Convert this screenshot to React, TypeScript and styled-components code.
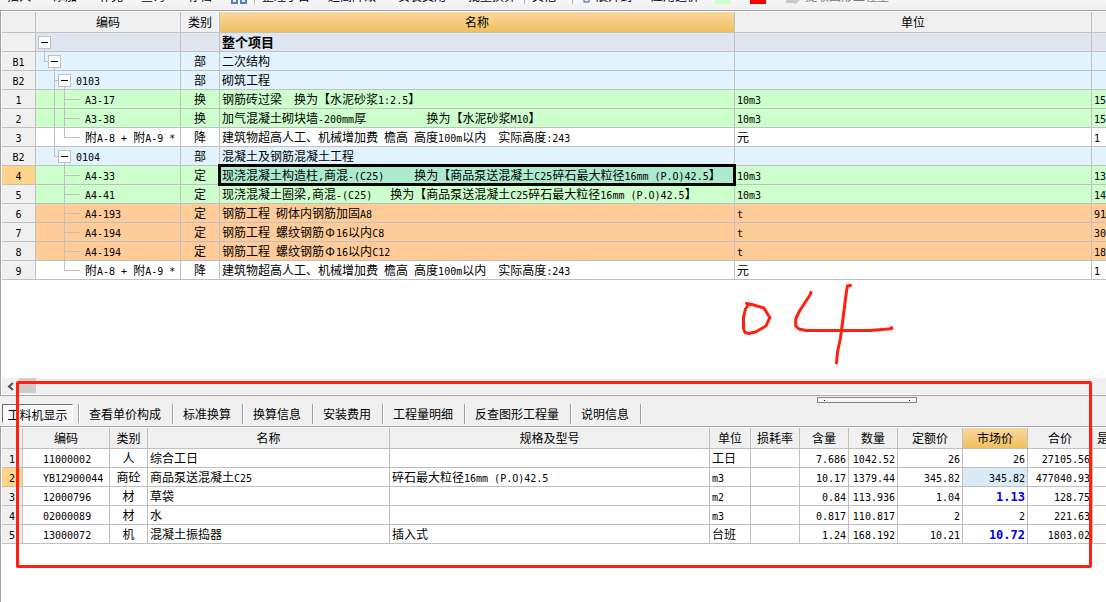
import React from 'react';
import styled, { createGlobalStyle, css } from 'styled-components';

const GlobalStyle = createGlobalStyle`
  * { box-sizing: border-box; }
  body {
    margin: 0;
    background: #fff;
    color: #000;
    font: 12px/18px "Noto Sans CJK SC", sans-serif;
  }
  button {
    margin: 0;
    padding: 0;
    border: 0;
    background: none;
    color: inherit;
    font: inherit;
    white-space: nowrap;
  }
`;

const line = '#c0c0c0';
const frame = '#a5a5a9';
const face = '#f0f0f0';
const amber = 'linear-gradient(#f9d8a0, #f0bf5f)';

const Page = styled.div`
  position: relative;
  display: flex;
  flex-direction: column;
  min-height: 100vh;
  overflow: hidden;
`;

/* ---------- mixed-width text ---------- */

const Half = styled.span<{ $big?: boolean }>`
  font-family: "DejaVu Sans Mono", monospace;
  font-size: ${(p) => (p.$big ? 12 : 10)}px;
  line-height: 0;
  white-space: pre;
`;

const Wide = styled.span`
  display: inline-block;
  width: 12px;
  line-height: 12px;
  text-align: center;
`;

function Txt({ children, big }: { children: string; big?: boolean }) {
  return (
    <>
      {children.split(/([\x20-\x7e]+|Φ)/).map((s, i) => {
        if (!s) return null;
        if (s === 'Φ') return <Wide key={i}>Φ</Wide>;
        return i % 2 ? <Half key={i} $big={big}>{s}</Half> : s;
      })}
    </>
  );
}

/* ---------- toolbar ---------- */

const Toolbar = styled.div`
  display: flex;
  align-items: flex-end;
  height: 10px;
  padding: 0 0 6px 7px;
  overflow: hidden;
  background: linear-gradient(#f7f7f7, #efefef);
`;

const ToolButton = styled.button<{ $w: number; $muted?: boolean }>`
  flex: none;
  display: flex;
  align-items: flex-end;
  width: ${(p) => p.$w}px;
  height: 16px;
  line-height: 16px;
  gap: 4px;
  color: ${(p) => (p.$muted ? '#777' : '#000')};
`;

const ToolSep = styled.span`
  flex: none;
  width: 1px;
  height: 20px;
  margin: 0 7px 0 0;
  background: #b4b4b4;
`;

const Swatch = styled.button<{ $c: string }>`
  flex: none;
  width: 16px;
  height: 16px;
  margin-right: 19px;
  && { background: ${(p) => p.$c}; }
`;

const BookIcon = () => (
  <svg width="16" height="16" viewBox="0 0 16 16" aria-hidden="true">
    <rect x="1" y="9" width="5" height="6" fill="#dfe9f7" stroke="#5f7fae" strokeWidth="2" />
    <rect x="10" y="9" width="5" height="6" fill="#dfe9f7" stroke="#5f7fae" strokeWidth="2" />
  </svg>
);

const PageIcon = () => (
  <svg width="7" height="16" viewBox="0 0 7 16" aria-hidden="true">
    <rect x="1" y="3" width="5" height="12" fill="#dfe9f7" stroke="#3f5f8f" />
    <path d="M3 12h2" stroke="#3f5f8f" />
  </svg>
);

const ArrowIcon = () => (
  <svg width="16" height="16" viewBox="0 0 16 16" aria-hidden="true">
    <path d="M1 10h7V6l7 6-4 4-3-1H1z" fill="#c9c9c9" />
  </svg>
);

/* ---------- grids ---------- */

const Pane = styled.section<{ $grow?: boolean }>`
  border-top: 1px solid ${frame};
  border-left: 1px solid ${frame};
  padding: 1px 0 0 1px;
  ${(p) => p.$grow && 'flex: 1;'}
`;

const Grid = styled.table`
  width: 100%;
  table-layout: fixed;
  border-collapse: separate;
  border-spacing: 0;
`;

const Th = styled.th<{ $hot?: boolean; $clip?: boolean }>`
  height: 21px;
  padding: 0 ${(p) => (p.$clip ? 4 : 0)}px;
  border: solid ${line};
  border-width: 0 1px 1px 0;
  background: ${(p) => (p.$hot ? amber : face)};
  font-weight: 400;
  text-align: ${(p) => (p.$clip ? 'left' : 'center')};
  white-space: nowrap;
  overflow: ${(p) => (p.$clip ? 'hidden' : 'visible')};
  ${(p) => p.$clip && 'border-right: 0;'}
`;

const Td = styled.td<{ $align?: string; $indent?: number; $bg?: string; $current?: boolean }>`
  position: relative;
  height: 19px;
  padding: 0 2px 0 ${(p) => p.$indent ?? 2}px;
  border: solid ${line};
  border-width: 0 1px 1px 0;
  text-align: ${(p) => p.$align ?? 'left'};
  white-space: pre;
  ${(p) => p.$bg && `background: ${p.$bg};`}
  &:last-child { border-right: 0; }
  ${(p) =>
    p.$current &&
    css`
      &::after {
        content: '';
        position: absolute;
        inset: -2px;
        z-index: 1;
        border: 3px solid #000;
      }
    `}
`;

const Tr = styled.tr<{ $bg?: string }>`
  background: ${(p) => p.$bg ?? '#fff'};
`;

const Strong = styled.b`
  font-size: 13px;
`;

const Price = styled.b`
  color: #0000f0;
`;

/* ---------- tree ---------- */

const Tree = styled.div`
  display: flex;
  height: 18px;
`;

type Link = ' ' | '|' | '+' | 'L';

const Guide = styled.span<{ $k: Link }>`
  position: relative;
  flex: none;
  width: 10px;
  &::before {
    content: '';
    position: absolute;
    left: 6px;
    top: 0;
    width: 1px;
    height: ${(p) => (p.$k === ' ' ? 0 : p.$k === 'L' ? 9 : 19)}px;
    background: ${line};
  }
  &::after {
    content: '';
    position: absolute;
    left: 6px;
    top: 9px;
    width: ${(p) => (p.$k === '+' || p.$k === 'L' ? 4 : 0)}px;
    height: 1px;
    background: ${line};
  }
`;

const Stub = styled.span`
  flex: none;
  width: 12px;
  height: 1px;
  margin: 9px 5px 0 0;
  background: ${line};
`;

const Toggle = styled.button`
  position: relative;
  flex: none;
  width: 13px;
  height: 13px;
  margin: 3px 5px 0 0;
  && {
    border: 1px solid ${line};
    background: #fff;
  }
  &::before {
    content: '';
    position: absolute;
    left: 2px;
    top: 5px;
    width: 7px;
    height: 1px;
    background: #000;
  }
  &::after {
    content: '';
    position: absolute;
    left: 5px;
    top: 12px;
    width: 1px;
    height: 3px;
    background: ${line};
  }
`;

interface Item {
  no: string;
  links: Link[];
  group?: boolean;
  code?: string;
  kind: string;
  name: string;
  unit?: string;
  qty?: string;
  bg?: string;
  selected?: boolean;
}

const blue = '#e1f3ff';
const green = '#ccffcc';
const orange = '#ffcc99';
const extra = '建筑物超高人工、机械增加费 檐高 高度100m以内  实际高度:243';
const mix = '换为【商品泵送混凝土C25碎石最大粒径16mm (P.O)42.5】';

const items: Item[] = [
  { no: '', links: [], group: true, kind: '', name: '整个项目', bg: '#dfe6f0' },
  { no: 'B1', links: ['L'], group: true, kind: '部', name: '二次结构', bg: blue },
  { no: 'B2', links: [' ', '+'], group: true, code: '0103', kind: '部', name: '砌筑工程', bg: blue },
  { no: '1', links: [' ', '|', '+'], code: 'A3-17', kind: '换', name: '钢筋砖过梁  换为【水泥砂浆1:2.5】', unit: '10m3', qty: '15', bg: green },
  { no: '2', links: [' ', '|', '+'], code: 'A3-38', kind: '换', name: '加气混凝土砌块墙-200mm厚          换为【水泥砂浆M10】', unit: '10m3', qty: '15', bg: green },
  { no: '3', links: [' ', '|', 'L'], code: '附A-8 + 附A-9 *', kind: '降', name: extra, unit: '元', qty: '1' },
  { no: 'B2', links: [' ', 'L'], group: true, code: '0104', kind: '部', name: '混凝土及钢筋混凝土工程', bg: blue },
  { no: '4', links: [' ', ' ', '+'], code: 'A4-33', kind: '定', name: `现浇混凝土构造柱,商混-(C25)     ${mix}`, unit: '10m3', qty: '13', bg: green, selected: true },
  { no: '5', links: [' ', ' ', '+'], code: 'A4-41', kind: '定', name: `现浇混凝土圈梁,商混-(C25)   ${mix}`, unit: '10m3', qty: '14', bg: green },
  { no: '6', links: [' ', ' ', '+'], code: 'A4-193', kind: '定', name: '钢筋工程 砌体内钢筋加固A8', unit: 't', qty: '91', bg: orange },
  { no: '7', links: [' ', ' ', '+'], code: 'A4-194', kind: '定', name: '钢筋工程 螺纹钢筋Φ16以内C8', unit: 't', qty: '30', bg: orange },
  { no: '8', links: [' ', ' ', '+'], code: 'A4-194', kind: '定', name: '钢筋工程 螺纹钢筋Φ16以内C12', unit: 't', qty: '18', bg: orange },
  { no: '9', links: [' ', ' ', 'L'], code: '附A-8 + 附A-9 *', kind: '降', name: extra, unit: '元', qty: '1' },
];

const resources = [
  ['1', '11000002', '人', '综合工日', '', '工日', '', '7.686', '1042.52', '26', '26', '27105.56'],
  ['2', 'YB12900044', '商砼', '商品泵送混凝土C25', '碎石最大粒径16mm (P.O)42.5', 'm3', '', '10.17', '1379.44', '345.82', '345.82', '477040.93'],
  ['3', '12000796', '材', '草袋', '', 'm2', '', '0.84', '113.936', '1.04', '1.13', '128.75'],
  ['4', '02000089', '材', '水', '', 'm3', '', '0.817', '110.817', '2', '2', '221.63'],
  ['5', '13000072', '机', '混凝土振捣器', '插入式', '台班', '', '1.24', '168.192', '10.21', '10.72', '1803.02'],
];

const resourceHeads = ['', '编码', '类别', '名称', '规格及型号', '单位', '损耗率', '含量', '数量', '定额价', '市场价', '合价', '是'];

const Cols = ({ widths }: { widths: number[] }) => (
  <colgroup>
    {widths.map((w, i) => (
      <col key={i} width={w} />
    ))}
    <col />
  </colgroup>
);

/* ---------- scroll bar, splitter, tabs ---------- */

const Blank = styled.div`
  height: 98px;
`;

const ScrollBar = styled.div`
  display: flex;
  height: 17px;
  background: ${face};
  border-bottom: 1px solid #fff;
`;

const ScrollArrow = styled.button`
  display: flex;
  align-items: center;
  justify-content: center;
  width: 17px;
`;

const Thumb = styled.div`
  width: 17px;
  height: 15px;
  background: #cdcdcd;
`;

const TabPanel = styled.div`
  border-top: 1px solid ${frame};
  background: ${face};
`;

const Splitter = styled.div`
  display: flex;
  justify-content: flex-end;
  height: 8px;
  padding: 1px 189px 0 0;
`;

const Grip = styled.div`
  display: flex;
  justify-content: space-between;
  width: 100px;
  height: 6px;
  padding: 2px 6px 0;
  border: 1px solid #868686;
  background: #f4f4f4;
  &::before,
  &::after {
    content: '';
    width: 1px;
    height: 1px;
    background: #000080;
  }
`;

const Tabs = styled.div`
  display: flex;
  height: 22px;
  padding: 0 0 2px 2px;
`;

const Tab = styled.button<{ $active?: boolean }>`
  && {
    padding: 0 11px 0 10px;
    border-right: 1px solid #a0a0a0;
    box-shadow: 1px 0 #fff;
  }
  ${(p) =>
    p.$active &&
    css`
      && {
        width: 71px;
        height: 19px;
        margin-right: 6px;
        padding: 1px 0 0;
        border: 1px solid;
        border-color: #6e6e6e #fff #fff #6e6e6e;
        box-shadow: 5px 0 ${face}, 6px 0 #a0a0a0, 7px 0 #fff;
        background: repeating-conic-gradient(#fff 0 25%, ${face} 0 50%) 0 0 / 2px 2px;
      }
    `}
`;

/* ---------- red markup ---------- */

const Frame = styled.div`
  position: absolute;
  z-index: 2;
  left: 16px;
  right: 14px;
  top: 381px;
  height: 187px;
  border: 3px solid #ff2012;
  border-radius: 2px;
  pointer-events: none;
`;

const Ink = styled.svg`
  position: absolute;
  z-index: 2;
  left: 740px;
  top: 282px;
  pointer-events: none;
`;

export default function App() {
  return (
    <Page>
      <GlobalStyle />
      <Toolbar>
        <ToolButton $w={46}>插入</ToolButton>
        <ToolButton $w={46}>添加</ToolButton>
        <ToolButton $w={42}>补充</ToolButton>
        <ToolButton $w={47}>查询</ToolButton>
        <ToolButton $w={43}>存档</ToolButton>
        <ToolButton $w={23} aria-label="查找"><BookIcon /></ToolButton>
        <ToolSep />
        <ToolButton $w={66}>整理子目</ToolButton>
        <ToolButton $w={70}>超高降效</ToolButton>
        <ToolButton $w={70}>安装费用</ToolButton>
        <ToolButton $w={56}>批量换算</ToolButton>
        <ToolSep />
        <ToolButton $w={40}>其他</ToolButton>
        <ToolSep />
        <ToolButton $w={71}>
          <Wide><PageIcon /></Wide>展开到
        </ToolButton>
        <ToolButton $w={64}>应用造价</ToolButton>
        <Swatch $c="#ccffcc" aria-label="绿色" />
        <Swatch $c="#ff0000" aria-label="红色" />
        <ToolButton $w={106} $muted>
          <ArrowIcon />提取图形工程量
        </ToolButton>
      </Toolbar>

      <Pane>
        <Grid>
          <Cols widths={[34, 145, 39, 515, 357]} />
          <thead>
            <tr>
              <Th />
              <Th>编码</Th>
              <Th>类别</Th>
              <Th $hot>名称</Th>
              <Th>单位</Th>
              <Th $clip />
            </tr>
          </thead>
          <tbody>
            {items.map((r, i) => (
              <Tr key={i} $bg={r.bg}>
                <Td $align="center" $bg={r.selected ? '#ffd388' : face}><Txt>{r.no}</Txt></Td>
                <Td>
                  <Tree>
                    {r.links.map((k, j) => (
                      <Guide key={j} $k={k} />
                    ))}
                    {r.group ? <Toggle aria-label="折叠" /> : <Stub />}
                    <span><Txt>{r.code ?? ''}</Txt></span>
                  </Tree>
                </Td>
                <Td $align="center">{r.kind}</Td>
                <Td $current={r.selected} $bg={r.selected ? '#adebcf' : undefined}>
                  {i === 0 ? <Strong>{r.name}</Strong> : <Txt>{r.name}</Txt>}
                </Td>
                <Td><Txt>{r.unit ?? ''}</Txt></Td>
                <Td><Txt>{r.qty ?? ''}</Txt></Td>
              </Tr>
            ))}
          </tbody>
        </Grid>
        <Blank />
        <ScrollBar>
          <ScrollArrow aria-label="向左滚动">
            <svg width="7" height="9" viewBox="0 0 7 9" aria-hidden="true">
              <path d="M6 1L2 4.500L6 8" fill="none" stroke="#505050" strokeWidth="2" />
            </svg>
          </ScrollArrow>
          <Thumb />
        </ScrollBar>
      </Pane>

      <TabPanel>
        <Splitter><Grip /></Splitter>
        <Tabs>
          <Tab $active>工料机显示</Tab>
          <Tab>查看单价构成</Tab>
          <Tab>标准换算</Tab>
          <Tab>换算信息</Tab>
          <Tab>安装费用</Tab>
          <Tab>工程量明细</Tab>
          <Tab>反查图形工程量</Tab>
          <Tab>说明信息</Tab>
        </Tabs>
      </TabPanel>

      <Pane $grow>
        <Grid>
          <Cols widths={[21, 87, 38, 242, 320, 41, 49, 49, 49, 65, 65, 65]} />
          <thead>
            <tr>
              {resourceHeads.map((h, i) => (
                <Th key={i} $hot={i === 10} $clip={i === 12}>{h}</Th>
              ))}
            </tr>
          </thead>
          <tbody>
            {resources.map((r, ri) => (
              <Tr key={ri}>
                {r.map((v, i) => {
                  const bold = i === 10 && (ri === 2 || ri === 4);
                  const bg = i === 0 ? (ri === 1 ? '#ffd388' : face) : i === 10 && ri === 1 ? '#d9eaf9' : undefined;
                  return (
                    <Td
                      key={i}
                      $align={i === 0 || i === 2 ? 'center' : i > 6 ? 'right' : 'left'}
                      $indent={i === 1 ? 20 : 2}
                      $bg={bg}
                    >
                      {bold ? <Price><Txt big>{v}</Txt></Price> : <Txt>{v}</Txt>}
                    </Td>
                  );
                })}
                <Td />
              </Tr>
            ))}
          </tbody>
        </Grid>
      </Pane>

      <Frame />
      <Ink width="156" height="84" viewBox="740 282 156 84" aria-hidden="true">
        <g fill="none" stroke="#ff2012" strokeWidth="3" strokeLinecap="round" strokeLinejoin="round">
          <path d="M746.500 303.500L752 304.500L764 308L769.800 317.700L766 326L756 331.700L749 333.500L745 332.500L743.500 328.500V317L745.500 309L748.500 304.500" />
          <path d="M811 292.300L810 295L799.500 311L795.700 319V326L799 329L806 330.500H870L891 328.700M891.500 327.500L892 328.500" />
          <path d="M850.500 285.500L847.700 285.700L846.500 291L840.500 338L837.500 352L836.500 363" />
        </g>
      </Ink>
    </Page>
  );
}
